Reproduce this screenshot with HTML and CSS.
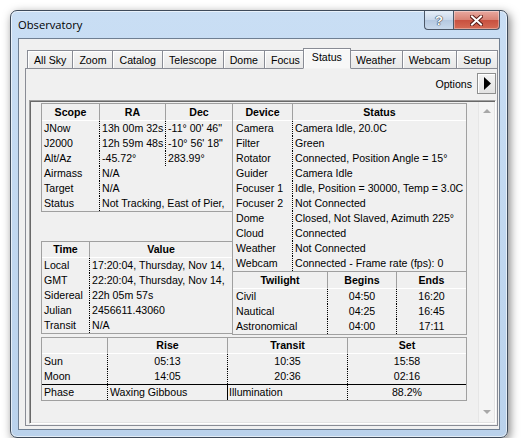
FILE: index.html
```html
<!DOCTYPE html>
<html lang="en">
<head>
<meta charset="UTF-8">
<title>Observatory</title>
<link rel="stylesheet" href="styles.css">
</head>
<body>

<div class="window">
    <div class="titlebar">
        <span class="title">Observatory</span>
        <div class="caption">
            <div class="cap-btn help">?</div>
            <div class="cap-btn close">
                <svg width="13" height="11" viewBox="0 0 13 11">
                    <path d="M2 1.5 L11 9.5 M11 1.5 L2 9.5" stroke="#5a1c16" stroke-width="4" stroke-linecap="square"/>
                    <path d="M2 1.5 L11 9.5 M11 1.5 L2 9.5" stroke="#fff" stroke-width="2" stroke-linecap="square"/>
                </svg>
            </div>
        </div>
    </div>

    <div class="client">
        <div class="tabs">
            <div class="tab">All Sky</div>
            <div class="tab">Zoom</div>
            <div class="tab">Catalog</div>
            <div class="tab">Telescope</div>
            <div class="tab">Dome</div>
            <div class="tab">Focus</div>
            <div class="tab active">Status</div>
            <div class="tab">Weather</div>
            <div class="tab">Webcam</div>
            <div class="tab">Setup</div>
        </div>

        <div class="tab-panel">
            <div class="options">
                <span>Options</span>
                <div class="opt-btn">
                    <svg width="7" height="13" viewBox="0 0 7 13"><polygon points="0,0 7,6.5 0,13" fill="#000"/></svg>
                </div>
            </div>

            <div class="scroll-view">
                <div class="status-grid">
                    <div class="col-left">
                        <table class="tbl scope">
                            <tr><th>Scope</th><th>RA</th><th>Dec</th></tr>
                            <tr><td>JNow</td><td>13h 00m 32s</td><td>-11° 00' 46"</td></tr>
                            <tr><td>J2000</td><td>12h 59m 48s</td><td>-10° 56' 18"</td></tr>
                            <tr><td>Alt/Az</td><td>-45.72°</td><td>283.99°</td></tr>
                            <tr><td>Airmass</td><td colspan="2">N/A</td></tr>
                            <tr><td>Target</td><td colspan="2">N/A</td></tr>
                            <tr><td>Status</td><td colspan="2">Not Tracking, East of Pier,</td></tr>
                        </table>

                        <table class="tbl time">
                            <tr><th>Time</th><th>Value</th></tr>
                            <tr><td>Local</td><td>17:20:04, Thursday, Nov 14,</td></tr>
                            <tr><td>GMT</td><td>22:20:04, Thursday, Nov 14,</td></tr>
                            <tr><td>Sidereal</td><td>22h 05m 57s</td></tr>
                            <tr><td>Julian</td><td>2456611.43060</td></tr>
                            <tr><td>Transit</td><td>N/A</td></tr>
                        </table>
                    </div>

                    <div class="col-right">
                        <table class="tbl device">
                            <tr><th>Device</th><th>Status</th></tr>
                            <tr><td>Camera</td><td>Camera Idle, 20.0C</td></tr>
                            <tr><td>Filter</td><td>Green</td></tr>
                            <tr><td>Rotator</td><td>Connected, Position Angle = 15°</td></tr>
                            <tr><td>Guider</td><td>Camera Idle</td></tr>
                            <tr><td>Focuser 1</td><td>Idle, Position = 30000, Temp = 3.0C</td></tr>
                            <tr><td>Focuser 2</td><td>Not Connected</td></tr>
                            <tr><td>Dome</td><td>Closed, Not Slaved, Azimuth 225°</td></tr>
                            <tr><td>Cloud</td><td>Connected</td></tr>
                            <tr><td>Weather</td><td>Not Connected</td></tr>
                            <tr><td>Webcam</td><td>Connected - Frame rate (fps): 0</td></tr>
                        </table>

                        <table class="tbl twilight">
                            <tr><th>Twilight</th><th>Begins</th><th>Ends</th></tr>
                            <tr><td>Civil</td><td class="c">04:50</td><td class="c">16:20</td></tr>
                            <tr><td>Nautical</td><td class="c">04:25</td><td class="c">16:45</td></tr>
                            <tr><td>Astronomical</td><td class="c">04:00</td><td class="c">17:11</td></tr>
                        </table>
                    </div>

                    <table class="tbl sun">
                        <tr><th></th><th>Rise</th><th>Transit</th><th>Set</th></tr>
                        <tr><td>Sun</td><td class="c">05:13</td><td class="c">10:35</td><td class="c">15:58</td></tr>
                        <tr><td>Moon</td><td class="c">14:05</td><td class="c">20:36</td><td class="c">02:16</td></tr>
                        <tr class="phase"><td>Phase</td><td>Waxing Gibbous</td><td class="solid">Illumination</td><td class="c">88.2%</td></tr>
                    </table>
                </div>

                <div class="scrollbar">
                    <span class="arr up"></span>
                    <span class="arr down"></span>
                </div>
            </div>
        </div>
    </div>
</div>

</body>
</html>
```

FILE: styles.css
```css
* {
    box-sizing: border-box;
}

body {
    margin: 0;
    background-color: #ffffff;
    font-family: "Liberation Sans", Arial, sans-serif;
    font-size: 10.6px;
    color: #000000;
}

/* window frame */
.window {
    margin: 10px 0 0 10px;
    width: 498px;
    height: 428px;
    border: 1px solid #3f4b5a;
    border-radius: 7px;
    padding: 0 7px 7px 7px;
    background: linear-gradient(#c9def4, #bad2ec);
    box-shadow: inset 0 0 0 1px rgba(255, 255, 255, 0.6), 2px 3px 10px rgba(0, 0, 0, 0.5);
    display: flex;
    flex-direction: column;
}

.titlebar {
    height: 27px;
    display: flex;
    justify-content: space-between;
    align-items: flex-start;
}

.title {
    font-family: "Open Sans", "Noto Sans", sans-serif;
    font-size: 11.2px;
    padding-top: 6px;
}

.caption {
    display: flex;
}

.cap-btn {
    height: 19px;
    display: flex;
    align-items: center;
    justify-content: center;
    border: 1px solid #4c5868;
    border-top: none;
}

.help {
    width: 29px;
    border-radius: 0 0 0 4px;
    border-right: none;
    background: linear-gradient(#e6eef8, #c9d8ea 50%, #b4c8e0 51%, #c8d9ec);
    color: #ffffff;
    font-weight: bold;
    font-size: 13px;
    text-shadow: 0 0 1px #2f3a48, 0 0 1px #2f3a48, 0 0 1px #2f3a48;
}

.close {
    width: 47px;
    border-radius: 0 0 4px 0;
    background: linear-gradient(#e8a9a0, #d88274 50%, #c8503f 51%, #d56b55);
    box-shadow: inset 0 0 0 1px rgba(255, 255, 255, 0.35);
}

/* client area */
.client {
    flex: 1;
    background-color: #f0f0f0;
    border: 1px solid #6f7f92;
    padding: 9px 1px 3px 6px;
    display: flex;
    flex-direction: column;
}

.tabs {
    display: flex;
    align-items: flex-end;
    height: 21px;
    padding-left: 2px;
    margin-bottom: -1px;
    position: relative;
    z-index: 1;
}

.tab {
    height: 18px;
    line-height: 18px;
    margin: 0 -1px 1px 0;
    padding: 0 6px;
    border: 1px solid #898c95;
    border-bottom: none;
    background: linear-gradient(#f6f6f6, #e8e8e8);
    box-shadow: inset 1px 1px 0 #ffffff;
    white-space: nowrap;
}

.tab.active {
    height: 21px;
    line-height: 17px;
    padding: 0 8px;
    margin: 0 -2px 0 -3px;
    background: #f7f7f7;
    border-bottom: 1px solid #f3f3f3;
    position: relative;
    z-index: 2;
}

.tab-panel {
    flex: 1;
    border: 1px solid #898c95;
    background-color: #f0f0f0;
    padding: 4px 0 1px 3px;
    display: flex;
    flex-direction: column;
}

.options {
    height: 21px;
    display: flex;
    justify-content: flex-end;
    align-items: center;
    gap: 5px;
    padding-right: 1px;
}

.opt-btn {
    width: 19px;
    height: 21px;
    border: 1px solid #8e8f8f;
    background: linear-gradient(#f4f4f4, #e2e2e2);
    box-shadow: inset 1px 1px 0 #ffffff;
    display: flex;
    align-items: center;
    justify-content: center;
    padding-left: 1px;
}

/* scrolling status area */
.scroll-view {
    flex: 1;
    margin: 6px 1px 0 0;
    border-top: 1px solid #a0a0a0;
    border-left: 1px solid #a0a0a0;
    border-right: 1px solid #ffffff;
    border-bottom: 1px solid #ffffff;
    box-shadow: inset 1px 1px 0 #696969, inset -1px -1px 0 #e3e3e3;
    padding: 2px 1px 1px 11px;
    display: flex;
}

.status-grid {
    display: grid;
    grid-template-columns: 191px 235px;
    align-self: flex-start;
}

.scrollbar {
    margin: -1px 0 0 auto;
    width: 16px;
    background-color: #f4f4f4;
    border-left: 1px solid #e6e6e6;
    display: flex;
    flex-direction: column;
    justify-content: space-between;
    align-items: center;
    padding: 7px 0 8px 0;
}

.arr {
    width: 0;
    height: 0;
    border-left: 4px solid transparent;
    border-right: 4px solid transparent;
}

.arr.up {
    border-bottom: 4px solid #a8a8a8;
}

.arr.down {
    border-top: 4px solid #a8a8a8;
}

/* tables */
.tbl {
    border-collapse: separate;
    border-spacing: 0;
    table-layout: fixed;
    border: 1px solid #a0a0a0;
    background-color: #f0f0f0;
}

.tbl th {
    font-weight: bold;
    line-height: 16px;
    padding: 0;
    text-align: center;
    border-bottom: 1px solid #ffffff;
    white-space: nowrap;
    overflow: hidden;
}

.tbl th + th {
    border-left: 1px solid #a0a0a0;
}

.tbl td {
    line-height: 15px;
    padding: 0 2px;
    white-space: nowrap;
    overflow: hidden;
}

.tbl td + td {
    border-left: 1px dotted #000000;
}

.tbl td.c {
    text-align: center;
}

.col-left .tbl {
    width: 191px;
    border-right: none;
}

.col-right .tbl {
    width: 235px;
}

.col-right td:first-child {
    padding-left: 3px;
}

.scope th:nth-child(1) { width: 57px; }
.scope th:nth-child(2) { width: 66px; }

.time {
    margin-top: 29px;
}

.time th {
    line-height: 15px;
}

.time th:nth-child(1) { width: 47px; }

.device th:nth-child(1) { width: 59px; }

.twilight {
    border-top: none;
}

.twilight th:nth-child(1) { width: 94px; }
.twilight th:nth-child(2) { width: 69px; }

.sun {
    grid-column: 1 / 3;
    width: 426px;
    margin-top: 2px;
}

.sun th {
    line-height: 15px;
}

.sun th:nth-child(1) { width: 65px; }
.sun th:nth-child(2) { width: 120px; }
.sun th:nth-child(3) { width: 120px; }

.phase td {
    border-top: 1px solid #000000;
}

.tbl td.solid {
    border-left: 1px solid #000000;
    padding-left: 1px;
}
```
